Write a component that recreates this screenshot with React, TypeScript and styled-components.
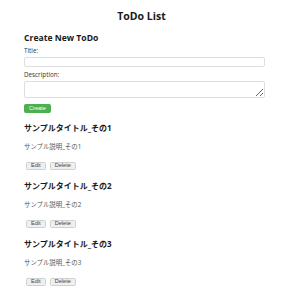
import React, {useState} from 'react'
import styled, {createGlobalStyle} from 'styled-components'

const GlobalStyle = createGlobalStyle`
    body {
        margin: 0;
        background: #ffffff;
        font-family: "Open Sans", "Noto Sans CJK JP", sans-serif;
        color: #1a1a1a;
    }
`

const Page = styled.div`
    padding: 0 18px 0 24px;
`

const Title = styled.h1`
    margin: 0;
    padding-top: 9px;
    line-height: 14px;
    font-size: 10.5px;
    font-weight: 700;
    text-align: center;
`

const SectionTitle = styled.h2`
    margin: 9px 0 0 0;
    line-height: 12px;
    font-size: 8.6px;
    font-weight: 700;
`

const Form = styled.div`
    display: flex;
    flex-direction: column;
`

const Label = styled.label<{gap: number}>`
    margin-top: ${p => p.gap}px;
    font-size: 6.3px;
    line-height: 8px;
    color: #333;
`

const TextInput = styled.input`
    box-sizing: border-box;
    margin-top: 2px;
    height: 10px;
    width: 100%;
    border: 1px solid #dedede;
    border-radius: 2px;
    padding: 0 3px;
    font-size: 6px;
`

const TextArea = styled.textarea`
    box-sizing: border-box;
    margin-top: 2px;
    height: 17px;
    width: 100%;
    border: 1px solid #dedede;
    border-radius: 2px;
    padding: 2px 3px;
    font-size: 6px;
    display: block;
`

const ButtonRow = styled.div`
    display: flex;
    margin-top: 6px;
`

const Btn = styled.button<{variant?: 'primary' | 'plain'}>`
    box-sizing: border-box;
    font-family: "Liberation Sans", Arial, sans-serif;
    font-size: 5.6px;
    height: ${p => p.variant === 'primary' ? '9px' : '8px'};
    line-height: 1;
    padding: 0 ${p => p.variant === 'primary' ? '4px' : '4px'};
    border-radius: 1.5px;
    cursor: pointer;
    color: ${p => p.variant === 'primary' ? '#ffffff' : '#444'};
    background: ${p => p.variant === 'primary' ? '#4caf50' : '#efefef'};
    border: 1px solid ${p => p.variant === 'primary' ? '#4caf50' : '#d0d0d0'};
`

const List = styled.ul`
    list-style: none;
    margin: 0;
    padding: 0;
`

const Item = styled.li`
    margin-top: 10px;

    &:first-child {
        margin-top: 9px;
    }
`

const ItemTitle = styled.h3`
    margin: 0;
    font-size: 8px;
    line-height: 12px;
    font-weight: 700;
`

const ItemDesc = styled.p`
    margin: 9px 0 0 0;
    font-size: 6.4px;
    line-height: 8px;
    color: #555;
`

const ItemButtons = styled.div`
    display: flex;
    gap: 4px;
    margin: 11px 0 0 2px;
`

type Todo = {
    id: number,
    title: string,
    description: string
}

const initialTodos: Todo[] = [
    {id: 1, title: 'サンプルタイトル_その1', description: 'サンプル説明_その1'},
    {id: 2, title: 'サンプルタイトル_その2', description: 'サンプル説明_その2'},
    {id: 3, title: 'サンプルタイトル_その3', description: 'サンプル説明_その3'},
]

const App: React.FC = () => {
    const [todos] = useState(initialTodos)
    const [title, setTitle] = useState('')
    const [description, setDescription] = useState('')

    return (
        <>
            <GlobalStyle/>
            <Title>ToDo List</Title>
            <Page>
                <SectionTitle>Create New ToDo</SectionTitle>
                <Form>
                    <Label gap={3}>Title:</Label>
                    <TextInput value={title} onChange={e => setTitle(e.target.value)}/>
                    <Label gap={4}>Description:</Label>
                    <TextArea value={description} onChange={e => setDescription(e.target.value)}/>
                </Form>
                <ButtonRow>
                    <Btn variant='primary'>Create</Btn>
                </ButtonRow>
                <List>
                    {todos.map(todo => (
                        <Item key={todo.id}>
                            <ItemTitle>{todo.title}</ItemTitle>
                            <ItemDesc>{todo.description}</ItemDesc>
                            <ItemButtons>
                                <Btn>Edit</Btn>
                                <Btn>Delete</Btn>
                            </ItemButtons>
                        </Item>
                    ))}
                </List>
            </Page>
        </>
    )
}

export default App
